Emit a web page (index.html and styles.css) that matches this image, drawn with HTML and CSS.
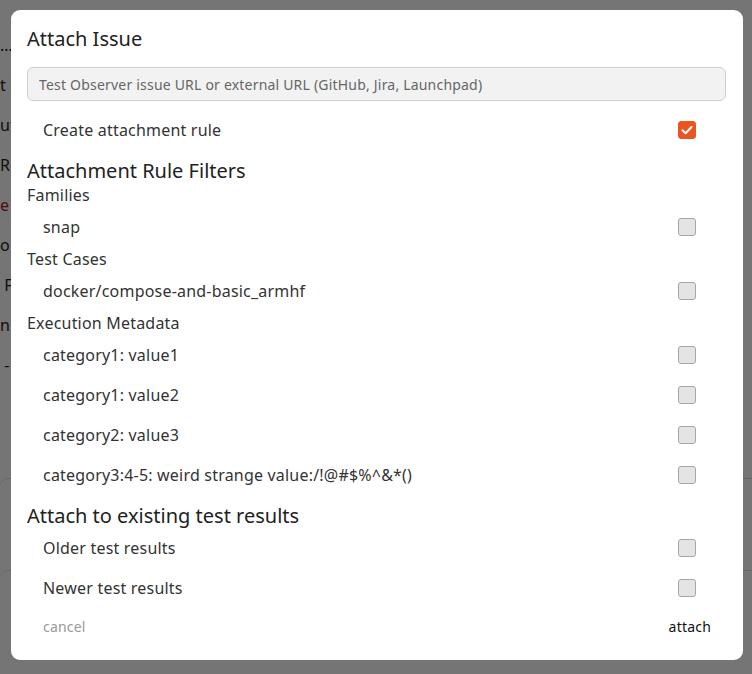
FILE: index.html
```html
<!DOCTYPE html>
<html lang="en">
<head>
<meta charset="utf-8">
<title>Attach Issue</title>
<link rel="stylesheet" href="styles.css">
</head>
<body>
<div class="page">
  <div class="bg-line">…</div>
  <div class="bg-line">t l</div>
  <div class="bg-line">ut</div>
  <div class="bg-line">Re</div>
  <div class="bg-line red">e</div>
  <div class="bg-line">o</div>
  <div class="bg-line">&nbsp;F</div>
  <div class="bg-line">n</div>
  <div class="bg-line">&nbsp;-</div>
  <div class="bg-card first"></div>
  <div class="bg-card"></div>
</div>
<div class="overlay">
  <div class="dialog">
    <h2 class="title">Attach Issue</h2>
    <input class="url" type="text" placeholder="Test Observer issue URL or external URL (GitHub, Jira, Launchpad)">
    <label class="row">
      <span>Create attachment rule</span>
      <span class="box checked"><svg viewBox="0 0 18 18" width="18" height="18"><path d="M4.5 9.2 L7.6 12.2 L13.5 6" fill="none" stroke="#fff" stroke-width="2" stroke-linecap="round" stroke-linejoin="round"/></svg></span>
    </label>
    <h2 class="section">Attachment Rule Filters</h2>
    <div class="group">Families</div>
    <label class="row"><span>snap</span><span class="box"></span></label>
    <div class="group">Test Cases</div>
    <label class="row"><span>docker/compose-and-basic_armhf</span><span class="box"></span></label>
    <div class="group">Execution Metadata</div>
    <label class="row"><span>category1: value1</span><span class="box"></span></label>
    <label class="row"><span>category1: value2</span><span class="box"></span></label>
    <label class="row"><span>category2: value3</span><span class="box"></span></label>
    <label class="row"><span>category3:4-5: weird strange value:/!@#$%^&amp;*()</span><span class="box"></span></label>
    <h2 class="section">Attach to existing test results</h2>
    <label class="row"><span>Older test results</span><span class="box"></span></label>
    <label class="row"><span>Newer test results</span><span class="box"></span></label>
    <div class="actions">
      <button class="btn cancel">cancel</button>
      <button class="btn attach">attach</button>
    </div>
  </div>
</div>
</body>
</html>
```
FILE: styles.css
```css
* { box-sizing: border-box; }
html, body { margin: 0; padding: 0; }
body {
  width: 752px;
  height: 674px;
  overflow: hidden;
  background: #ffffff;
  font-family: "Noto Sans", "Open Sans", sans-serif;
  color: #333;
}
.page {
  display: flex;
  flex-direction: column;
  padding-top: 30px;
  font-size: 16px;
  color: #222;
}
.bg-line { height: 40px; line-height: 30px; white-space: pre; }
.red { color: #a3202a; }
.bg-card {
  margin-top: 62px;
  height: 30px;
  border-top: 1px solid #ddd;
  border-radius: 8px 0 0 0;
}
.bg-card.first { margin-top: 88px; }
.overlay {
  position: fixed;
  inset: 0;
  background: rgba(0, 0, 0, 0.54);
  padding: 10px 9px 14px 11px;
  display: flex;
  align-items: flex-start;
}
.dialog {
  width: 732px;
  height: 650px;
  background: #fff;
  border-radius: 9px;
  padding: 16px 17px 13px 16px;
  display: flex;
  flex-direction: column;
}
.title, .section {
  margin: 0;
  font-weight: 400;
  font-size: 20px;
  line-height: 26px;
  color: #222;
}
.title { margin-bottom: 15px; }
.section { margin-top: 8px; line-height: 25px; }
.url {
  height: 34px;
  width: 100%;
  border: 1px solid #cfcfcf;
  border-radius: 6px;
  background: #f2f2f2;
  padding: 0 11px;
  font-family: inherit;
  font-size: 14px;
  letter-spacing: 0.2px;
  color: #333;
  margin: 0 0 9px 0;
  outline: none;
}
.url::placeholder { color: #666; }
.row {
  height: 40px;
  display: flex;
  align-items: center;
  justify-content: space-between;
  padding: 0 30px 0 16px;
  font-size: 16px;
  letter-spacing: 0.2px;
  color: #333;
}
.group {
  height: 24px;
  line-height: 24px;
  font-size: 16px;
  letter-spacing: 0.2px;
  color: #333;
}
.box {
  width: 18px;
  height: 18px;
  border-radius: 3px;
  border: 1px solid #a6a6a6;
  background: #e4e4e4;
  display: flex;
}
.box.checked {
  background: #e95420;
  border-color: #e95420;
}
.box svg { margin: -1px; }
.actions {
  display: flex;
  justify-content: space-between;
  align-items: center;
  height: 36px;
  padding: 0 15px 0 16px;
}
.btn {
  border: 0;
  background: none;
  padding: 0;
  font-family: inherit;
  font-size: 14px;
  letter-spacing: 0.2px;
}
.cancel { color: #999; }
.attach { color: #111; }
```
